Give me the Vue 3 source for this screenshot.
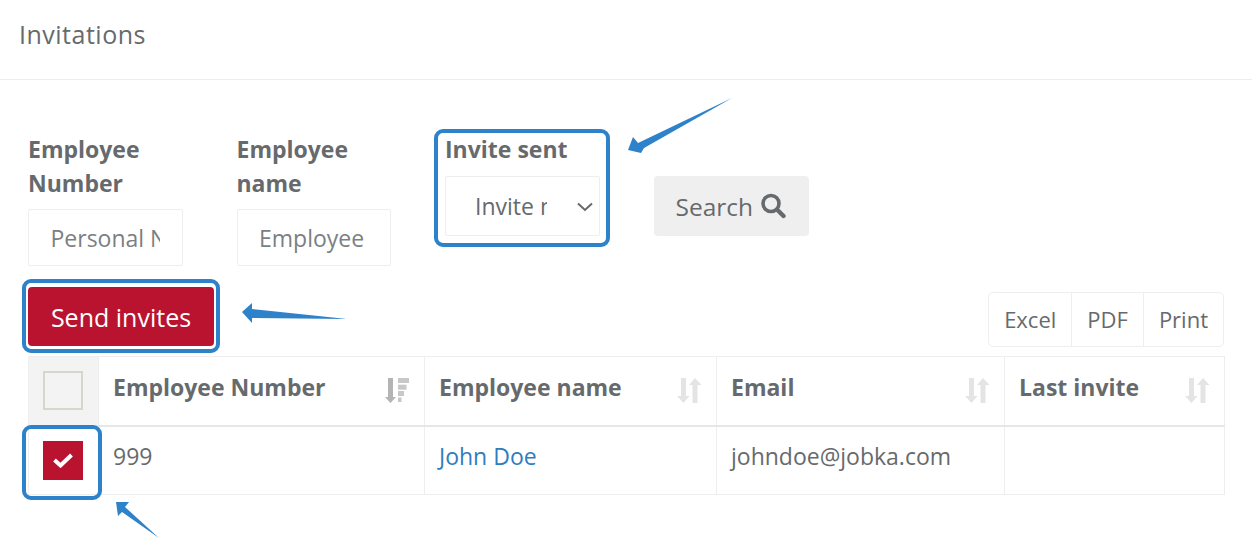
<template>
  <div class="page">
    <div class="page-header">Invitations</div>

    <div class="filters">
      <div class="field">
        <label class="field-label">Employee Number</label>
        <input class="field-input" type="text" placeholder="Personal Number" />
      </div>
      <div class="field">
        <label class="field-label">Employee name</label>
        <input class="field-input" type="text" placeholder="Employee name" />
      </div>
      <div class="field">
        <label class="field-label">Invite sent</label>
        <div class="select-wrap">
          <select class="field-select">
            <option>Invite not sent</option>
            <option>Invite sent</option>
          </select>
          <svg class="select-chevron" viewBox="0 0 16 10" width="16" height="10">
            <path d="M1 1.5 L8 8 L15 1.5" fill="none" stroke="#666a6d" stroke-width="2" />
          </svg>
        </div>
      </div>
      <button type="button" class="search-btn">
        Search
        <svg viewBox="0 0 26 26" width="26" height="26">
          <circle cx="11" cy="10.5" r="8" fill="none" stroke="#666a6d" stroke-width="3.6" />
          <path d="M17 16.5 L23.5 23" fill="none" stroke="#666a6d" stroke-width="4.4" stroke-linecap="round" />
        </svg>
      </button>
    </div>

    <div class="toolbar">
      <button type="button" class="send-btn">Send invites</button>
      <div class="export-group">
        <button v-for="name in exportButtons" :key="name" type="button" class="export-btn">{{ name }}</button>
      </div>
    </div>

    <table class="invites-table">
      <colgroup>
        <col style="width: 70px" />
        <col style="width: 326px" />
        <col style="width: 292px" />
        <col style="width: 288px" />
        <col style="width: 220px" />
      </colgroup>
      <thead>
        <tr>
          <th class="check-cell check-head"><span class="checkbox"></span></th>
          <th v-for="col in columns" :key="col.label">
            <div class="th-inner">
              <span>{{ col.label }}</span>
              <svg v-if="col.sorted" class="sort-icon" viewBox="0 0 25 25" width="25" height="25">
                <path d="M3 0H8V19H11L5.5 25L0 19H3Z" fill="#b4b4b4" />
                <rect x="13" y="0" width="11" height="5" fill="#c8c8c8" />
                <rect x="13" y="6.7" width="8.5" height="5" fill="#c8c8c8" />
                <rect x="13" y="13" width="6" height="5" fill="#c8c8c8" />
                <rect x="13" y="19.5" width="3.5" height="4.5" fill="#c8c8c8" />
              </svg>
              <svg v-else class="sort-icon" viewBox="0 0 25 25" width="25" height="25">
                <path d="M4 0H9V18H12.5L6.5 25L0 18H4Z" fill="#e4e4e4" />
                <path d="M15.5 25H20.5V7H24.5L18 0L12 7H15.5Z" fill="#e4e4e4" />
              </svg>
            </div>
          </th>
        </tr>
      </thead>
      <tbody>
        <tr>
          <td class="check-cell">
            <span class="checkbox is-checked">
              <svg viewBox="0 0 20 15" width="20" height="15">
                <path d="M1.5 7 L7.5 12.5 L18.5 2" fill="none" stroke="#fff" stroke-width="4" />
              </svg>
            </span>
          </td>
          <td class="text-cell">999</td>
          <td class="text-cell"><a class="name-link" href="#">John Doe</a></td>
          <td class="text-cell">johndoe@jobka.com</td>
          <td></td>
        </tr>
      </tbody>
    </table>

    <!-- annotations drawn over the screenshot -->
    <div class="mark mark-select"></div>
    <div class="mark mark-send"></div>
    <div class="mark mark-check"></div>
    <svg class="arrows" viewBox="0 0 1252 547" width="1252" height="547">
      <polygon points="628,150 633,137 638,143 732,98 644,148 641,153" fill="#2d82c9" />
      <polygon points="242,312 252,303 252,309 347,319 252,318 252,323" fill="#2d82c9" />
      <polygon points="116,502 129,502 125,507 159,538 122,512 118,516" fill="#2d82c9" />
    </svg>
  </div>
</template>

<script setup>
const exportButtons = ['Excel', 'PDF', 'Print']

const columns = [
  { label: 'Employee Number', sorted: true },
  { label: 'Employee name', sorted: false },
  { label: 'Email', sorted: false },
  { label: 'Last invite', sorted: false }
]
</script>

<style>
html,
body {
  background: #ffffff;
}
</style>

<style scoped>
.page {
  position: relative;
  width: 1252px;
  height: 547px;
  overflow: hidden;
  font-family: "Open Sans", "Liberation Sans", sans-serif;
  font-size: 23px;
  color: #666a6d;
  background: #ffffff;
}

.page-header {
  height: 45px;
  padding: 17px 19px;
  font-size: 25px;
  font-weight: 500;
  letter-spacing: 0.5px;
  line-height: 34px;
  border-bottom: 1px solid #eeeeee;
}

.filters {
  display: flex;
  align-items: flex-start;
  gap: 54px;
  height: 133px;
  padding: 53px 28px 0;
}

.field {
  width: 154.5px;
}

.field-label {
  display: block;
  margin-bottom: 9px;
  font-size: 23px;
  font-weight: 700;
  line-height: 33.5px;
}

.field-input {
  display: block;
  width: 100%;
  height: 57px;
  box-sizing: border-box;
  padding: 0 21.5px;
  border: 1px solid #eeeeee;
  border-radius: 2px;
  outline: none;
  font: inherit;
  color: #666a6d;
  background: #ffffff;
}

.field-input::placeholder {
  color: #7c7f82;
  opacity: 1;
}

.select-wrap {
  position: relative;
  height: 60px;
  margin-top: 0.5px;
}

.field-select {
  display: block;
  width: 100%;
  height: 60px;
  box-sizing: border-box;
  padding: 0 52px 0 29px;
  border: 1px solid #eeeeee;
  border-radius: 2px;
  outline: none;
  appearance: none;
  font: inherit;
  color: #666a6d;
  background: #ffffff;
}

.select-chevron {
  position: absolute;
  top: 26px;
  right: 7px;
}

.search-btn {
  display: flex;
  align-items: center;
  gap: 7px;
  width: 155.5px;
  height: 60px;
  margin-top: 43px;
  padding: 0 22px;
  box-sizing: border-box;
  border: 0;
  border-radius: 4px;
  font: inherit;
  font-size: 24.5px;
  color: #666a6d;
  background: #efefef;
}

.toolbar {
  display: flex;
  align-items: flex-end;
  justify-content: space-between;
  margin: 21px 28px 9px;
}

.send-btn {
  width: 186px;
  height: 59px;
  margin-bottom: 1px;
  border: 0;
  border-radius: 4px;
  font: inherit;
  font-size: 25px;
  color: #ffffff;
  background: #b9132f;
}

.export-group {
  display: flex;
  height: 55px;
  box-sizing: border-box;
  border: 1px solid #eeeeee;
  border-radius: 5px;
}

.export-btn {
  padding: 0 15px 2px;
  border: 0;
  border-left: 1px solid #eeeeee;
  font: inherit;
  font-size: 22px;
  color: #666a6d;
  background: transparent;
}

.export-btn:first-child {
  border-left: 0;
}

.invites-table {
  width: 1196px;
  margin-left: 28px;
  border-collapse: collapse;
  table-layout: fixed;
}

.invites-table th,
.invites-table td {
  box-sizing: border-box;
  border: 1px solid #eeeeee;
  padding: 0 14px;
  text-align: left;
}

.invites-table th {
  height: 69px;
  border-bottom: 2px solid #e6e6e6;
  font-weight: 700;
}

.invites-table td {
  height: 69px;
}

.invites-table td.text-cell {
  padding-bottom: 8px;
}

.check-head {
  background: #f3f3f3;
}

.th-inner {
  display: flex;
  align-items: center;
  justify-content: space-between;
}

.th-inner span {
  position: relative;
  top: -4px;
}

.sort-icon {
  flex-shrink: 0;
}

.checkbox {
  display: flex;
  align-items: center;
  justify-content: center;
  width: 40px;
  height: 39px;
  box-sizing: border-box;
  border: 2px solid #d8d4ce;
}

.checkbox.is-checked {
  border: 0;
  background: #b9132f;
}

.name-link {
  color: #2f7dbf;
  text-decoration: none;
}

.mark {
  position: absolute;
  box-sizing: border-box;
  border: 4px solid #2d82c9;
  border-radius: 9px;
}

.mark-select {
  left: 434px;
  top: 129px;
  width: 176px;
  height: 118px;
}

.mark-send {
  left: 22px;
  top: 279px;
  width: 198px;
  height: 74px;
}

.mark-check {
  left: 22px;
  top: 425px;
  width: 80px;
  height: 75px;
}

.arrows {
  position: absolute;
  left: 0;
  top: 0;
  pointer-events: none;
}
</style>
